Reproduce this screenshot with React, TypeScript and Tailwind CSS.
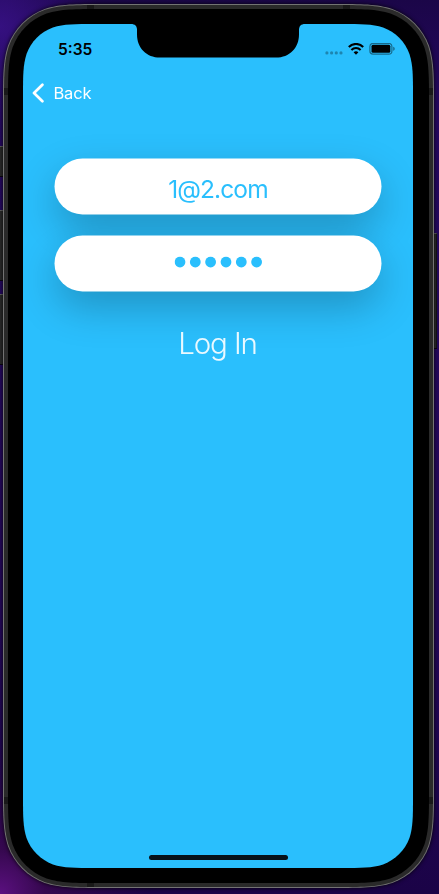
import type { ReactNode } from "react";

// Continuous-curvature rounded rectangle, in the style of iOS device corners.
function squircle(w: number, h: number, r: number): string {
  const [a, b, c, d, e, f, g] = [1.52866, 1.08849, 0.86841, 0.63149, 0.07491, 0.37282, 0.16906].map((k) => k * r);
  return [
    `M${a} 0 L${w - a} 0`,
    `C${w - b} 0 ${w - c} 0 ${w - d} ${e}`,
    `C${w - f} ${g} ${w - g} ${f} ${w - e} ${d}`,
    `C${w} ${c} ${w} ${b} ${w} ${a}`,
    `L${w} ${h - a}`,
    `C${w} ${h - b} ${w} ${h - c} ${w - e} ${h - d}`,
    `C${w - g} ${h - f} ${w - f} ${h - g} ${w - d} ${h - e}`,
    `C${w - c} ${h} ${w - b} ${h} ${w - a} ${h}`,
    `L${a} ${h}`,
    `C${b} ${h} ${c} ${h} ${d} ${h - e}`,
    `C${f} ${h - g} ${g} ${h - f} ${e} ${h - d}`,
    `C0 ${h - c} 0 ${h - b} 0 ${h - a}`,
    `L0 ${a}`,
    `C0 ${b} 0 ${c} ${e} ${d}`,
    `C${g} ${f} ${f} ${g} ${d} ${e}`,
    `C${c} 0 ${b} 0 ${a} 0Z`,
  ].join(" ");
}

function Layer({ w, h, r, className, children }: { w: number; h: number; r: number; className: string; children: ReactNode }) {
  return (
    <div className={className} style={{ width: w, height: h, clipPath: `path("${squircle(w, h, r)}")` }}>
      {children}
    </div>
  );
}

function StatusIcons() {
  return (
    <div className="flex items-center">
      <svg width="18" height="12" viewBox="0 0 18 12" fill="#000" fillOpacity="0.3">
        <circle cx="1.9" cy="9.9" r="1.6" />
        <circle cx="6.6" cy="9.9" r="1.6" />
        <circle cx="11.3" cy="9.9" r="1.6" />
        <circle cx="16" cy="9.9" r="1.6" />
      </svg>
      <svg className="ml-[5px]" width="16" height="12" viewBox="0 0 16 12" fill="none" stroke="#000" strokeWidth="2.1">
        <path d="M0.8 3.9a10.3 10.3 0 0 1 14.4 0" />
        <path d="M3.4 6.9a6.6 6.6 0 0 1 9.2 0" />
        <path d="M8 11.7 5.6 9.3a3.5 3.5 0 0 1 4.8 0Z" fill="#000" stroke="none" />
      </svg>
      <svg className="ml-[5px]" width="27" height="12" viewBox="0 0 27 12">
        <rect x="0.9" y="0.4" width="22" height="10.8" rx="3.2" fill="none" stroke="#000" strokeOpacity="0.45" strokeWidth="1.2" />
        <rect x="2.5" y="1.8" width="18.8" height="8" rx="1.5" fill="#000" />
        <path d="M24.2 3.8v4c1-.4 1.5-1.1 1.5-2s-.5-1.6-1.5-2Z" fill="#000" fillOpacity="0.45" />
      </svg>
    </div>
  );
}

const sideKeys = [
  "left-0 top-[146px] h-[30px] w-[4px]",
  "left-0 top-[210px] h-[70px] w-[4px]",
  "left-0 top-[294px] h-[70px] w-[4px]",
  "left-[433px] top-[233px] h-[115px] w-[4px] border-r",
];

const seams = [
  "left-[84px] top-[1px] h-[4px] w-[7px]",
  "left-[340px] top-[1px] h-[4px] w-[7px]",
  "left-[84px] bottom-[1px] h-[4px] w-[7px]",
  "left-[1px] top-[84px] h-[7px] w-[4px]",
  "right-[1px] top-[84px] h-[7px] w-[4px]",
  "left-[1px] top-[793px] h-[7px] w-[4px]",
  "right-[1px] top-[793px] h-[7px] w-[4px]",
];

const pill =
  "flex h-14 w-[327px] -translate-x-[0.5px] translate-y-[0.5px] items-center justify-center rounded-full bg-white shadow-[0_16px_40px_rgba(0,0,0,0.23)]";

export default function App() {
  return (
    <main className="relative h-[894px] w-[439px] overflow-hidden bg-[radial-gradient(circle_at_0%_100%,#5b1080_0px,#35084e_45px,transparent_150px),radial-gradient(circle_at_0%_3%,#351080_0px,transparent_100px),linear-gradient(180deg,#1b0648_0%,#250860_12%,#230759_70%,#1b0347_100%)] pl-[3px] pt-1 font-['Inter','Liberation_Sans',sans-serif]">
      {sideKeys.map((k) => (
        <span key={k} className={`absolute border-t border-[#626262] border-r-[#151515] bg-[#2a2a2a] shadow-[0_1px_0_#0a0510] ${k}`} />
      ))}
      <div className="relative h-[884px] w-[431px] drop-shadow-[0_0_2px_rgba(0,0,0,0.9)]">
        <Layer w={431} h={884} r={66} className="relative bg-[#737373] p-px">
          <Layer w={429} h={882} r={65} className="bg-[#2a2a2a] p-1">
            <Layer w={421} h={874} r={61} className="bg-black px-[15px] pt-[15px]">
              <Layer w={390} h={844} r={47.33} className="relative flex flex-col bg-[#2abffd]">
                <svg className="absolute left-[108px] top-0" width="174" height="34" viewBox="0 0 174 34">
                  <path d="M0 0H174C170 0 168 2 168 6V10.5C168 24 158.5 33.6 145 33.6H29C15.5 33.6 6 24 6 10.5V6C6 2 4 0 0 0Z" fill="#000" />
                </svg>
                <header className="flex h-[50px] items-center justify-between pl-[35px] pr-[17px]">
                  <span className="mt-px text-[15.5px] font-semibold leading-none text-black">5:35</span>
                  <StatusIcons />
                </header>
                <nav className="flex h-[38px] items-center pl-[9px] text-white">
                  <svg width="13" height="20" viewBox="0 0 13 20" fill="none" stroke="currentColor" strokeWidth="2.7" strokeLinecap="round" strokeLinejoin="round">
                    <path d="M10.4 1.8 2 10l8.4 8.2" />
                  </svg>
                  <span className="ml-[8.5px] text-[16.5px] font-normal leading-none tracking-[-0.2px]">Back</span>
                </nav>
                <form className="mt-[46px] flex flex-col items-center gap-[21px]">
                  <div className={pill}>
                    <span className="pl-px pt-[4px] text-[24.5px] font-normal leading-none tracking-[-0.9px] text-[#2abffd]">1@2.com</span>
                  </div>
                  <div className={pill}>
                    <svg className="-mt-[2px] ml-px" width="88" height="12" viewBox="0 0 88 12" fill="#2abffd">
                      {[5.5, 20.8, 36.1, 51.5, 66.8, 82.1].map((cx) => (
                        <circle key={cx} cx={cx} cy="5.5" r="5.4" />
                      ))}
                    </svg>
                  </div>
                  <button type="button" className="relative mt-[16px] pr-px text-[29.5px] font-light leading-[30px] tracking-[-1.1px] text-white/90">
                    Log In
                  </button>
                </form>
                <div className="mb-2 mt-auto h-[5px] w-[139px] self-center rounded-full bg-[#071219]" />
              </Layer>
            </Layer>
          </Layer>
          {seams.map((s) => (
            <span key={s} className={`absolute bg-[#191919] ${s}`} />
          ))}
        </Layer>
      </div>
    </main>
  );
}
